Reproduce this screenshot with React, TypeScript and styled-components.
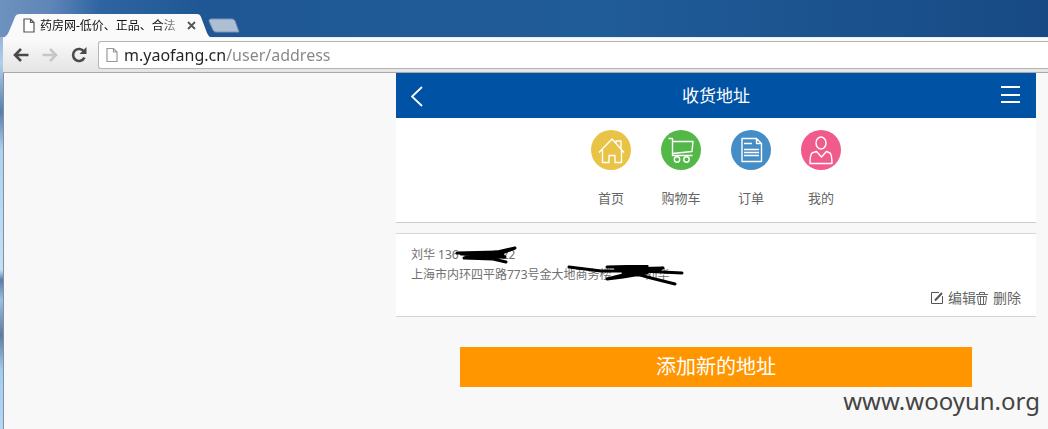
import React from "react";
import styled, { createGlobalStyle } from "styled-components";

const GlobalStyle = createGlobalStyle`
  * { box-sizing: border-box; }
  body {
    margin: 0;
    background: #f7f7f7;
    font-family: "Noto Sans", "Noto Sans CJK SC", sans-serif;
    color: #707070;
  }
  button, input { font: inherit; color: inherit; }
  button { border: 0; padding: 0; background: none; cursor: pointer; }
  a { color: inherit; text-decoration: none; }
  svg { display: block; flex: none; }
`;

const Desktop = styled.div`
  min-height: 100vh;
  display: flex;
  flex-direction: column;
  padding-left: 3px;
  position: relative;
  background:
    linear-gradient(90deg, #6e92bf 0, #5f86b8 50px, #2f64a2 100px, #1f5795 200px, #205c98 600px, #174a85 100%) 0 0 / 100% 37px no-repeat,
    linear-gradient(#7195c2 0, #b0cfea 64px, #587da9 112px, #b0d0ec 150px, #c4e0f4 270px, #597ba6 280px, #9cc0e2 300px, #61799f 335px, #a5cbed 370px, #b5d7f2 100%);
`;

const TabStrip = styled.header`
  height: 37px;
  display: flex;
  align-items: flex-end;
`;

const Tab = styled.div`
  position: relative;
  width: 208px;
  height: 25px;
  display: flex;
  align-items: center;
  padding: 0 13px 0 20px;
  margin-bottom: -1px;
  z-index: 1;
`;

const TabShape = styled.svg`
  position: absolute;
  inset: 0;
  z-index: -1;
`;

const TabTitle = styled.span`
  width: 140px;
  margin: 0 7px 0 5px;
  white-space: nowrap;
  font-size: 12px;
  line-height: 16px;
  color: #111;
  mask-image: linear-gradient(90deg, #000 120px, transparent 145px);
`;

const NewTab = styled.button`
  width: 32px;
  height: 15px;
  margin: 0 0 4px -3px;
`;

const Toolbar = styled.div`
  height: 36px;
  display: flex;
  align-items: center;
  padding-left: 8px;
  background: linear-gradient(#fbfbfb, #e4e4e4);
  border-top: 1px solid #e9eef4;
  border-bottom: 1px solid #aaa;
`;

const ToolButton = styled.button`
  width: 29px;
  height: 24px;
  display: flex;
  align-items: center;
  justify-content: flex-start;
  padding-left: 2px;
`;

const AddressBar = styled.label`
  flex: 1;
  height: 28px;
  display: flex;
  align-items: center;
  gap: 6px;
  padding-left: 7px;
  background: #fff;
  border: 1px solid #b5b5b5;
  border-right: 0;
  border-radius: 3px 0 0 3px;
`;

const AddressInput = styled.input`
  flex: 1;
  min-width: 0;
  height: 24px;
  padding: 0;
  border: 0;
  outline: 0;
  font-size: 16px;
  color: transparent;
  background: linear-gradient(90deg, #222 102px, #858585 102px);
  background-clip: text;
`;

const Viewport = styled.div`
  flex: 1;
  display: flex;
  justify-content: flex-end;
  padding-right: 12px;
  background: #f8f8f8;
  border-left: 1px solid #7c92a8;
`;

const Page = styled.main`
  width: 100%;
  max-width: 640px;
`;

const PageHeader = styled.header`
  height: 45px;
  display: flex;
  align-items: center;
  justify-content: space-between;
  padding: 0 15px;
  background: #0052a5;
  color: #fff;
`;

const PageTitle = styled.h1`
  margin: 0;
  font-size: 17px;
  line-height: 24px;
  font-weight: 400;
`;

const Nav = styled.nav`
  display: flex;
  justify-content: center;
  gap: 30px;
  padding: 12px 0;
  background: #fff;
  border-bottom: 1px solid #ccc;
`;

const NavLink = styled.a`
  width: 40px;
  display: flex;
  flex-direction: column;
  align-items: center;
  gap: 16px;
  font-size: 13px;
  line-height: 24px;
  white-space: nowrap;
  color: #666;
`;

const NavIcon = styled.span<{ $color: string }>`
  width: 40px;
  height: 40px;
  border-radius: 50%;
  background: ${(p) => p.$color};
`;

const Card = styled.section`
  margin-top: 10px;
  padding: 11px 15px 8px;
  background: #fff;
  border: solid #d5d5d5;
  border-width: 1px 0;
`;

const Line = styled.p`
  position: relative;
  margin: 0;
  font-size: 12px;
  line-height: 20px;
  white-space: pre;
`;

const Gap = styled.span<{ $width: number }>`
  display: inline-block;
  width: ${(p) => p.$width}px;
`;

const Scribble = styled.svg`
  position: absolute;
  top: 0;
  left: 0;
`;

const Actions = styled.div`
  display: flex;
  justify-content: flex-end;
  margin-top: 2px;
`;

const Action = styled.button`
  display: flex;
  align-items: center;
  gap: 4px;
  font-size: 14px;
  line-height: 21px;
  color: #666;
`;

const AddButton = styled.button`
  display: block;
  width: 80%;
  height: 40px;
  margin: 30px auto 0;
  background: #ff9600;
  color: #fff;
  font-size: 20px;
  line-height: 40px;
`;

const Watermark = styled.div`
  position: absolute;
  right: 8px;
  bottom: 10px;
  font-size: 24px;
  line-height: 36px;
  color: #444;
`;

const DocIcon = ({ w, h, color }: { w: number; h: number; color: string }) => (
  <svg width={w} height={h} viewBox="0 0 12 15" fill="#fff" stroke={color} strokeWidth="1.2">
    <path d="M1 1H7.5L11 4.5V14H1Z M7.5 1V4.5H11" />
  </svg>
);

const navItems = [
  {
    label: "首页",
    color: "#e9c345",
    icon: <path d="M8 22.5 21 9 33 22.5M25 13V11H30V18.5M11.5 20V32.5H18V25.5H24V32.5H30.5V20" />,
  },
  {
    label: "购物车",
    color: "#53b848",
    icon: (
      <>
        <path d="M7.5 8.500H11.500V25.500H31.500M11.500 11.500H32L31 21.500 11.500 23.500" />
        <circle cx="16" cy="29.500" r="2.700" />
        <circle cx="25.500" cy="29.500" r="2.700" />
      </>
    ),
  },
  {
    label: "订单",
    color: "#448dc6",
    icon: <path d="M11 8.500H25.500L30.500 13.500V31.500H11ZM25.500 8.500V13.500H30.500M13 13.500H21M13 19.500H28M13 22.500H28M13 25.500H28" />,
  },
  {
    label: "我的",
    color: "#f05b8c",
    icon: (
      <>
        <ellipse cx="20" cy="13" rx="5" ry="6" />
        <path d="M15.500 21.500 20.500 27 25.500 21.500 29 23Q31 25 31 33.500H9Q9 25 11 23Z" />
      </>
    ),
  },
];

export default function App() {
  return (
    <>
      <GlobalStyle />
      <Desktop>
        <TabStrip>
          <Tab>
            <TabShape width="208" height="25" viewBox="0 0 208 25">
              <path d="M0 25C4 23 5 21 7 16L12 4Q13 1 17 1H194Q197 1 198 4L204 20Q206 24 208 25Z" fill="#fafafa" />
            </TabShape>
            <DocIcon w={12} h={15} color="#555" />
            <TabTitle>药房网-低价、正品、合法</TabTitle>
            <button aria-label="关闭标签页">
              <svg width="9" height="9" viewBox="0 0 9 9" stroke="#555" strokeWidth="1.8">
                <path d="M1 1 8 8M8 1 1 8" />
              </svg>
            </button>
          </Tab>
          <NewTab aria-label="新标签页">
            <svg width="32" height="15" viewBox="0 0 32 15">
              <path d="M3 1H24Q26 1 27 3L31 14H8Q6 14 5 12L1 3Q1 1 3 1Z" fill="#aebfd3" stroke="#7894b5" />
            </svg>
          </NewTab>
        </TabStrip>
        <Toolbar>
          <ToolButton aria-label="后退">
            <svg width="16" height="14" viewBox="0 0 16 14" fill="none" stroke="#4a4a4a" strokeWidth="2.600">
              <path d="M15.500 7H2M8 1 2 7 8 13" />
            </svg>
          </ToolButton>
          <ToolButton aria-label="前进">
            <svg width="16" height="14" viewBox="0 0 16 14" fill="none" stroke="#c6c6c6" strokeWidth="2.600">
              <path d="M.5 7H14M8 1 14 7 8 13" />
            </svg>
          </ToolButton>
          <ToolButton aria-label="重新加载">
            <svg width="16" height="16" viewBox="0 0 16 16" fill="none" stroke="#4a4a4a" strokeWidth="2.600">
              <path d="M13 4.500A6 6 0 1 0 13.500 10.500" />
              <path d="M15.500 0V7H8.500Z" fill="#4a4a4a" stroke="none" />
            </svg>
          </ToolButton>
          <AddressBar>
            <DocIcon w={12} h={16} color="#999" />
            <AddressInput aria-label="地址" defaultValue="m.yaofang.cn/user/address" />
          </AddressBar>
        </Toolbar>
        <Viewport>
          <Page>
            <PageHeader>
              <button aria-label="返回">
                <svg width="20" height="22" viewBox="0 0 20 22" fill="none" stroke="#fff" strokeWidth="1.800">
                  <path d="M11 2 1 11.500 11 21" />
                </svg>
              </button>
              <PageTitle>收货地址</PageTitle>
              <button aria-label="菜单">
                <svg width="20" height="20" viewBox="0 0 20 20" stroke="#fff" strokeWidth="2">
                  <path d="M0 1H19M0 9H19M0 16H19" />
                </svg>
              </button>
            </PageHeader>
            <Nav>
              {navItems.map((item) => (
                <NavLink href="#" key={item.label}>
                  <NavIcon $color={item.color}>
                    <svg width="40" height="40" viewBox="0 0 40 40" fill="none" stroke="#fff" strokeWidth="1.400" strokeLinejoin="round">
                      {item.icon}
                    </svg>
                  </NavIcon>
                  {item.label}
                </NavLink>
              ))}
            </Nav>
            <Card>
              <Line>
                刘华 136<Gap $width={43} />22
                <Scribble width="120" height="20" fill="none" stroke="#000" strokeWidth="3" strokeLinecap="round" strokeLinejoin="round">
                  <path d="M46 8 86 7 50 9 92 10 55 11 94 12 82 8 104 3 86 10 53 13 94 12M53 13 82 14 95 17" />
                </Scribble>
              </Line>
              <Line>
                上海市内环四平路773号金大地商务楼<Gap $width={34} />刘华
                <Scribble width="290" height="22" fill="none" stroke="#000" strokeWidth="3" strokeLinecap="round" strokeLinejoin="round">
                  <path d="M158 2 190 6 230 6 271 8M196 2 236 1 208 4 252 3 224 7 196 14 212 12 236 8 204 3 240 13 264 19M212 8 250 4" />
                </Scribble>
              </Line>
              <Actions>
                <Action>
                  <svg width="14" height="14" viewBox="0 0 14 14" fill="none" stroke="#555">
                    <path d="M9 1.500H1.500V12.500H12.500V5" />
                    <path d="M5 9.500 12 2" strokeWidth="2" />
                  </svg>
                  编辑
                </Action>
                <Action>
                  <svg width="13" height="14" viewBox="0 0 13 14" fill="none" stroke="#666">
                    <path d="M0 3.500H12M3.500 3V1.500H8.500V3M1.500 5.500H10.500L9.500 13.500H2.500ZM4.500 5.500V13M7.500 5.500V13" />
                  </svg>
                  删除
                </Action>
              </Actions>
            </Card>
            <AddButton>添加新的地址</AddButton>
          </Page>
        </Viewport>
        <Watermark>www.wooyun.org</Watermark>
      </Desktop>
    </>
  );
}
